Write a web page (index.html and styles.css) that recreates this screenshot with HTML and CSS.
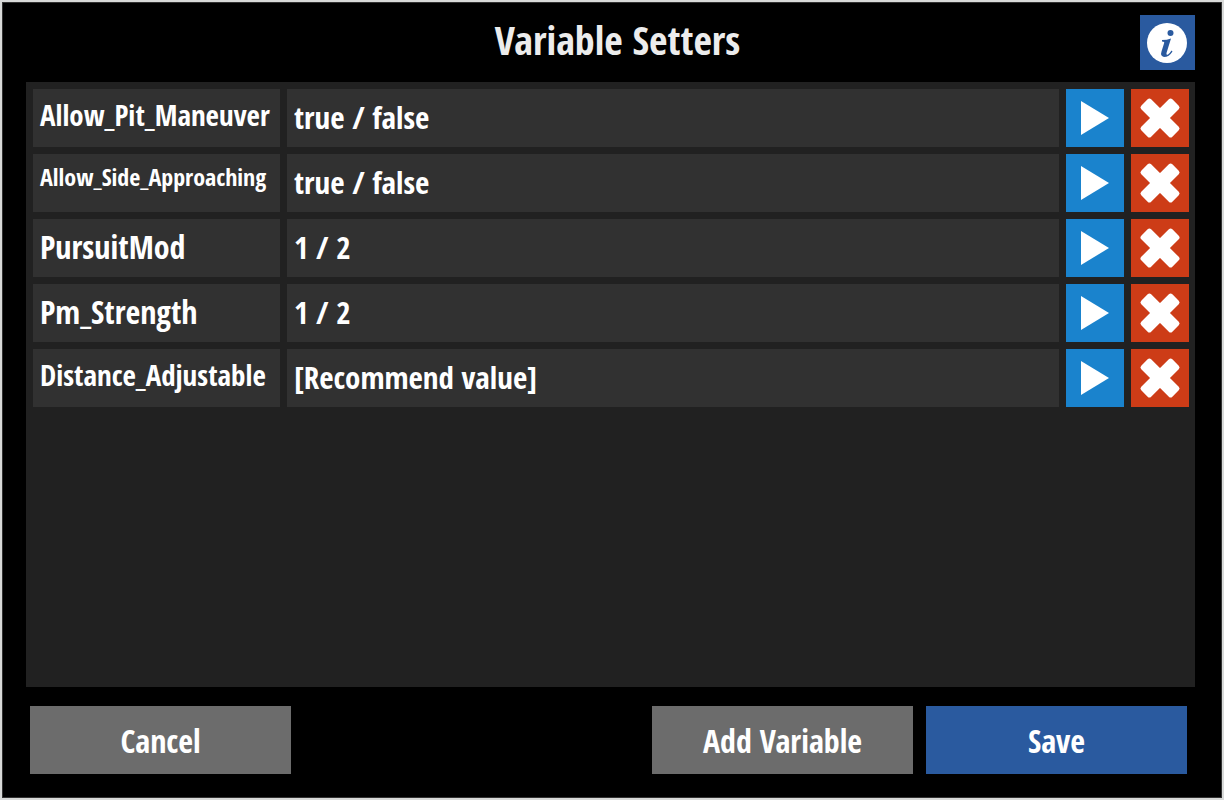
FILE: index.html
```html
<!DOCTYPE html>
<html lang="en">
<head>
  <meta charset="UTF-8">
  <meta name="viewport" content="width=device-width, initial-scale=1.0">
  <title>Variable Setters</title>
  <link rel="stylesheet" href="styles.css">
</head>
<body>
  <svg class="symbols" aria-hidden="true">
    <symbol id="play" viewBox="0 0 58 58">
      <path d="M15 12 L43 29 L15 46 Z" fill="#fff"/>
    </symbol>
    <symbol id="cross" viewBox="0 0 58 58">
      <g fill="#fff">
        <rect x="7" y="22" width="44" height="14" rx="2.5" transform="rotate(45 29 29)"/>
        <rect x="7" y="22" width="44" height="14" rx="2.5" transform="rotate(-45 29 29)"/>
      </g>
    </symbol>
  </svg>

  <form class="dialog">
    <header class="header">
      <h1 class="title">Variable Setters</h1>
      <button type="button" class="info" aria-label="Info">
        <svg viewBox="0 0 55 55">
          <circle cx="27" cy="28" r="20" fill="#fff"/>
          <circle cx="30.500" cy="18" r="3" fill="#2a5a9f"/>
          <path d="M22 25 Q27 25 31 23.500 L26.500 38 Q26 40.500 28 39.500 Q30 38 31.500 35.500 L32.500 36.500 Q29 42 24 42 Q20 41 21.500 36.500 L24 28.500 Q25 26.500 22 26.500 Z" fill="#2a5a9f"/>
        </svg>
      </button>
    </header>

    <main class="list">
      <div class="row">
        <label class="name medium" for="pit">Allow_Pit_Maneuver</label>
        <input class="value" id="pit" type="text" value="true / false">
        <button type="button" class="play" aria-label="Run"><svg><use href="#play"/></svg></button>
        <button type="button" class="remove" aria-label="Remove"><svg><use href="#cross"/></svg></button>
      </div>
      <div class="row">
        <label class="name small" for="side">Allow_Side_Approaching</label>
        <input class="value" id="side" type="text" value="true / false">
        <button type="button" class="play" aria-label="Run"><svg><use href="#play"/></svg></button>
        <button type="button" class="remove" aria-label="Remove"><svg><use href="#cross"/></svg></button>
      </div>
      <div class="row">
        <label class="name" for="mod">PursuitMod</label>
        <input class="value" id="mod" type="text" value="1 / 2">
        <button type="button" class="play" aria-label="Run"><svg><use href="#play"/></svg></button>
        <button type="button" class="remove" aria-label="Remove"><svg><use href="#cross"/></svg></button>
      </div>
      <div class="row">
        <label class="name" for="strength">Pm_Strength</label>
        <input class="value" id="strength" type="text" value="1 / 2">
        <button type="button" class="play" aria-label="Run"><svg><use href="#play"/></svg></button>
        <button type="button" class="remove" aria-label="Remove"><svg><use href="#cross"/></svg></button>
      </div>
      <div class="row">
        <label class="name medium" for="distance">Distance_Adjustable</label>
        <input class="value" id="distance" type="text" value="[Recommend value]">
        <button type="button" class="play" aria-label="Run"><svg><use href="#play"/></svg></button>
        <button type="button" class="remove" aria-label="Remove"><svg><use href="#cross"/></svg></button>
      </div>
    </main>

    <footer class="footer">
      <button type="button" class="action cancel">Cancel</button>
      <button type="button" class="action">Add Variable</button>
      <button type="submit" class="action save">Save</button>
    </footer>
  </form>
</body>
</html>
```

FILE: styles.css
```css
* {
  box-sizing: border-box;
}
body {
  margin: 0;
  min-height: 100vh;
  display: flex;
  background-color: #d8dad9;
  color: white;
  font-family: "Open Sans Condensed", "Roboto Condensed", "Liberation Sans Narrow", "Noto Sans", sans-serif;
  font-weight: bold;
}
button, input {
  font: inherit;
  color: inherit;
  border: 0;
  border-radius: 0;
  padding: 0;
}
button svg {
  display: block;
  width: 100%;
  height: 58px;
}
.symbols {
  position: absolute;
  width: 0;
  height: 0;
}
.dialog {
  flex: 1;
  display: flex;
  flex-direction: column;
  margin: 2px;
  padding: 0 26px 23px 23px;
  border: 1px solid #333;
  background-color: black;
}
.header {
  display: flex;
  align-items: center;
  height: 79px;
  padding-left: 69px;
}
.title {
  flex: 1;
  margin: 0;
  padding-bottom: 6px;
  text-align: center;
  font-size: 40px;
  line-height: 1;
  color: #ececec;
}
.info {
  width: 55px;
  height: 55px;
  background-color: #2a5a9f;
}
.info svg {
  height: 55px;
}
.list {
  flex: 1;
  display: flex;
  flex-direction: column;
  gap: 7px;
  padding: 7px 6px 7px 7px;
  background-color: #212121;
}
.row {
  display: grid;
  grid-template-columns: 247px 1fr 58px 58px;
  grid-template-rows: 58px;
  gap: 7px;
}
.name, .value {
  min-width: 0;
  padding: 5px 7px;
  background-color: #313131;
  font-size: 32px;
  line-height: 46px;
}
.name {
  white-space: nowrap;
}
.value {
  padding-bottom: 7px;
  font-size: 31px;
}
.medium {
  font-size: 29px;
  line-height: 42px;
}
.small {
  font-size: 24px;
  line-height: 36px;
}
.play {
  background-color: #1a83cd;
}
.remove {
  background-color: #cd3c17;
}
.footer {
  display: flex;
  gap: 13px;
  padding: 19px 8px 0 4px;
}
.action {
  flex: 0 1 261px;
  height: 68px;
  background-color: #6c6c6c;
  font-size: 32px;
}
.cancel {
  margin-right: auto;
}
.save {
  background-color: #2a5a9f;
}
```
